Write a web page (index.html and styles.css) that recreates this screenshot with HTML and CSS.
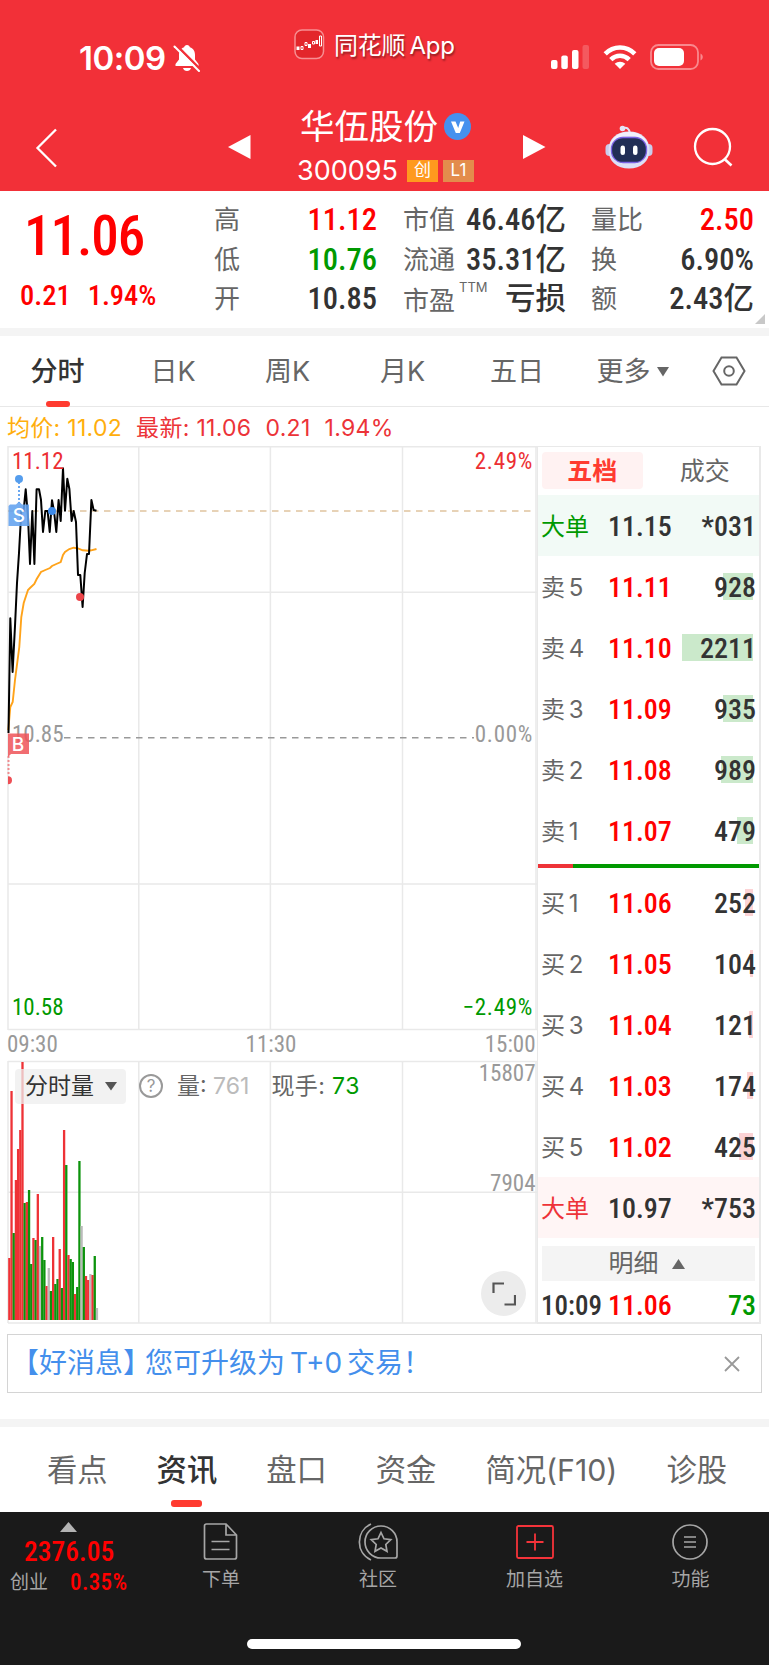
FILE: index.html
```html
<!DOCTYPE html>
<html lang="zh-CN">
<head>
    <meta charset="UTF-8">
    <meta name="viewport" content="width=device-width, initial-scale=1.0">
    <title>华伍股份 300095</title>
    <link rel="stylesheet" href="styles.css">
</head>
<body>
    <header>
        <div class="status-bar">
            <div class="clock">
                <span>10:09</span>
                <svg width="28" height="28" viewBox="0 0 28 28">
                    <path d="M14 1c-1.600 0-2.700 1-2.900 2.300C7.500 4.500 6 7.500 6 11v4.500L2.500 20v2h23v-2L22 15.500V11c0-3.500-1.500-6.500-5.100-7.700C16.700 2 15.600 1 14 1zM10 24h8c-.5 1.800-2 3-4 3s-3.500-1.200-4-3z" fill="#fff"/>
                    <path d="M3.500 1.500L27.500 25.500" stroke="#f23038" stroke-width="2.500"/>
                    <path d="M1.500 2.500L26 27" stroke="#fff" stroke-width="2" stroke-linecap="round"/>
                </svg>
            </div>
            <div class="app-name">
                <svg width="31" height="31" viewBox="0 0 31 31">
                    <rect x="1" y="1" width="28.500" height="28.500" rx="7" fill="#e3262b" stroke="#f78f92" stroke-width="1.500"/>
                    <path d="M2.500 17.500h3v3.500h-3zM14 15h3v4h-3zM21.500 11h2.500v4h-2.500z" fill="#fff"/>
                    <path d="M7 17.500h2v3H7zM11 13.500h2v3h-2zM18.500 12.500h2v2.500h-2zM25.500 7h2v10h-2z" fill="none" stroke="#fff" stroke-width="1"/>
                </svg>
                <span>同花顺 App</span>
            </div>
            <div class="signals">
                <svg width="40" height="26" viewBox="0 0 40 26">
                    <g fill="#fff">
                        <rect x="1" y="16" width="6.500" height="9" rx="2"/>
                        <rect x="11.300" y="11.500" width="6.500" height="13.500" rx="2"/>
                        <rect x="22" y="6" width="6.500" height="19" rx="2"/>
                        <rect x="32.500" y="1" width="6.500" height="24" rx="2" opacity=".2"/>
                    </g>
                </svg>
                <svg width="34" height="26" viewBox="0 0 34 26">
                    <g fill="none" stroke="#fff" stroke-width="4.600">
                        <path d="M2.200 9.800C10.500 1.400 23.500 1.400 31.800 9.800"/>
                        <path d="M7.800 15.600c5.300-5.200 13.100-5.200 18.400 0"/>
                    </g>
                    <path d="M17 25l-5.300-5.200c3-2.900 7.600-2.900 10.600 0z" fill="#fff"/>
                </svg>
                <svg width="54" height="28" viewBox="0 0 54 28">
                    <rect x="1" y="2" width="47" height="24" rx="7.500" fill="none" stroke="#f9888d" stroke-width="1.800"/>
                    <rect x="4" y="5" width="30" height="18" rx="5" fill="#fff"/>
                    <path d="M50.500 10.500c3 1.500 3 5.500 0 7z" fill="#f9888d"/>
                </svg>
            </div>
        </div>
        <div class="title-bar">
            <svg class="back" width="24" height="42" viewBox="0 0 24 42">
                <path d="M21 2.500L2.500 21 21 39.500" fill="none" stroke="#fff" stroke-width="2.300"/>
            </svg>
            <svg class="prev" width="23" height="26" viewBox="0 0 23 26"><path d="M0 13L22.500 1v24z" fill="#fff"/></svg>
            <div class="stock">
                <div class="stock-name">
                    <span>华伍股份</span>
                    <svg width="27" height="27" viewBox="0 0 27 27">
                        <circle cx="13.500" cy="13.500" r="13.500" fill="#4691ee"/>
                        <path d="M7 8.500h4.500l2.700 6.500 2-6.500H20.500L15.800 20h-4z" fill="#fff"/>
                    </svg>
                </div>
                <div class="stock-code">
                    <span>300095</span>
                    <i class="tag">创</i>
                    <i class="tag level">L1</i>
                </div>
            </div>
            <svg class="next" width="23" height="26" viewBox="0 0 23 26"><path d="M22.500 13L0 1v24z" fill="#fff"/></svg>
            <svg class="robot" width="48" height="44" viewBox="0 0 48 44">
                <path d="M17 3.500c5-2 7 0 8 5" fill="none" stroke="#e4e4f7" stroke-width="2"/>
                <circle cx="17.500" cy="3.500" r="2.800" fill="#e4e4f7"/>
                <rect x=".5" y="19" width="8" height="12" rx="4" fill="#c9cdec"/>
                <rect x="39.500" y="19" width="8" height="12" rx="4" fill="#c9cdec"/>
                <path d="M24 6.500c12 0 20.500 7 20.500 18.500S36 43.500 24 43.500 3.500 36.500 3.500 25 12 6.500 24 6.500z" fill="#dddff6"/>
                <path d="M24 7c11 0 18 6 19.500 15-3-8-9-11-19.500-11S7.500 14 4.500 22C6 13 13 7 24 7z" fill="#f1f0fc"/>
                <rect x="6.500" y="12.500" width="35" height="25" rx="11.500" fill="#222e55" stroke="#7a62e4" stroke-width="1.300"/>
                <rect x="15.500" y="20.500" width="4.500" height="9.500" rx="2.200" fill="#fff"/>
                <rect x="28" y="20.500" width="4.500" height="9.500" rx="2.200" fill="#fff"/>
            </svg>
            <svg class="search" width="40" height="40" viewBox="0 0 40 40">
                <circle cx="19.500" cy="19.500" r="17.500" fill="none" stroke="#fff" stroke-width="2.300"/>
                <path d="M31.500 32l7 6.500" stroke="#fff" stroke-width="2.600"/>
            </svg>
        </div>
    </header>

    <section class="quote">
        <div class="price-box">
            <div class="price num">11.06</div>
            <div class="change num"><span>0.21</span><span>1.94%</span></div>
        </div>
        <dl>
            <div><dt>高</dt><dd class="num up">11.12</dd></div>
            <div><dt>低</dt><dd class="num down">10.76</dd></div>
            <div><dt>开</dt><dd class="num">10.85</dd></div>
        </dl>
        <dl>
            <div><dt>市值</dt><dd class="num">46.46亿</dd></div>
            <div><dt>流通</dt><dd class="num">35.31亿</dd></div>
            <div><dt class="low">市盈<sup>TTM</sup></dt><dd class="num">亏损</dd></div>
        </dl>
        <dl>
            <div><dt>量比</dt><dd class="num up">2.50</dd></div>
            <div><dt>换</dt><dd class="num">6.90%</dd></div>
            <div><dt>额</dt><dd class="num">2.43亿</dd></div>
        </dl>
    </section>

    <nav class="period-tabs">
        <span class="active">分时</span>
        <span>日K</span>
        <span>周K</span>
        <span>月K</span>
        <span>五日</span>
        <span>更多<svg width="12" height="10" viewBox="0 0 12 10"><path d="M0 0h12L6 9.500z" fill="#666"/></svg></span>
        <span>
            <svg width="34" height="30" viewBox="0 0 34 30">
                <path d="M9.500 1.500h15L32.500 15l-8 13.500h-15L1.500 15z" fill="none" stroke="#666" stroke-width="2"/>
                <circle cx="17" cy="15" r="4.800" fill="none" stroke="#666" stroke-width="2"/>
            </svg>
        </span>
    </nav>

    <div class="legend">
        <span class="avg">均价: 11.02</span>
        <span>最新: 11.06</span>
        <span>0.21</span>
        <span>1.94%</span>
    </div>

    <main>
        <div class="charts">
            <svg class="trend" width="537" height="614" viewBox="0 446 537 614">
                <g fill="none" stroke="#e9e9e9" stroke-width="1.500">
                    <path d="M8 446.700H537M8 592.300H537M8 884H537M8 1029.500H537M8 446V1030M138.800 446V1030M270.400 446V1030M402.500 446V1030M536 446V1030"/>
                </g>
                <path d="M8 511H536" stroke="#e0c39f" stroke-width="1.500" stroke-dasharray="6.500 5.500"/>
                <path d="M64 737.800H474" stroke="#999" stroke-width="1.500" stroke-dasharray="6.500 5.500"/>
                <text x="12" y="742" fill="#999">10.85</text>
                <text class="percent" x="533" y="742" fill="#999" text-anchor="end">0.00%</text>
                <polyline fill="none" stroke="#ffa31a" stroke-width="1.900" points="8.300,730 10.300,707 12.700,702 15,680 19.300,647 21.300,617 23.700,603 28,590 30,588 34.300,584 36.700,579 41,572 45.300,570 50,568 52,566 56.300,564 60.700,562 63,555 65,552 69.300,549 73.700,547.700 78,548.300 82.700,550.300 89,550.700 91.300,550.300 96.500,549"/>
                <polyline fill="none" stroke="#000" stroke-width="2" stroke-linejoin="round" points="8.500,733 10.300,618.300 12.600,672 15,626 17,583 19,553 21.300,511 23.600,511 25.700,489.300 28,517 30,564 32.300,511 34.400,564 36.600,489.300 39,489.300 41,500 43,532 45.300,511 47.600,511 49.700,532 52,500.300 54,511 56.300,532 58.600,500 60.700,521 63,468.300 65,510.700 67.300,478.700 69.400,489 71.600,521 73.700,511 76,522 78,575 80.300,575 82.600,607 84.700,573 87,554 89,554 91.400,500 93.600,510 96.500,510.700"/>
                <text x="12" y="469" fill="#ec2f33">11.12</text>
                <text class="percent" x="533" y="469" fill="#ec2f33" text-anchor="end">2.49%</text>
                <text x="12" y="1015" fill="#009900">10.58</text>
                <text class="percent" x="533" y="1015" fill="#009900" text-anchor="end">−2.49%</text>

                <!-- sell / buy marks -->
                <path d="M19 482V503" stroke="#6aa7f0" stroke-width="2" stroke-dasharray="2 2"/>
                <circle cx="19" cy="479" r="4" fill="#559ded"/>
                <circle cx="52" cy="511" r="4" fill="#3e8bea"/>
                <path d="M10 504.500h6l3-3 3 3h7v21.500H8.500v-20z" fill="#62a2ef" opacity=".88"/>
                <text class="mark" x="19" y="522" text-anchor="middle">S</text>
                <path d="M8.500 756V776" stroke="#f08c8f" stroke-width="2" stroke-dasharray="2 2"/>
                <path d="M8 776.200a4 4 0 0 1 0 8z" fill="#ee4f55"/>
                <circle cx="80" cy="597" r="4" fill="#ec4449"/>
                <path d="M8 733.500h21V754H11l-3 3z" fill="#ee5358" opacity=".85"/>
                <text class="mark" x="18" y="751" text-anchor="middle">B</text>

                <text x="7" y="1052" fill="#999">09:30</text>
                <text x="271" y="1052" fill="#999" text-anchor="middle">11:30</text>
                <text x="535.500" y="1052" fill="#999" text-anchor="end">15:00</text>
            </svg>
            <div class="volume">
                <svg width="537" height="264" viewBox="0 1060 537 264">
                    <path d="M8 1061.500H537M8 1192.300H537M8 1323H537M8 1061V1323M138.800 1061V1323M270.400 1061V1323M402.500 1061V1323M536 1061V1323" fill="none" stroke="#e9e9e9" stroke-width="1.500"/>
                    <g id="volumeBars"></g>
                    <text x="535.500" y="1080.500" fill="#999" text-anchor="end">15807</text>
                    <text x="535.500" y="1191" fill="#999" text-anchor="end">7904</text>
                </svg>
                <div class="volume-tools">
                    <div class="picker">分时量<svg width="12" height="9" viewBox="0 0 12 9"><path d="M0 0h12L6 8.500z" fill="#555"/></svg></div>
                    <span class="help">?</span>
                    <span>量: <b class="flat">761</b></span>
                    <span class="current">现手: <b class="down">73</b></span>
                </div>
                <div class="expand">
                    <svg width="24" height="24" viewBox="0 0 24 24"><path d="M1.500 11V1.500H12M23 13v9.500H12.500" fill="none" stroke="#555" stroke-width="2.200"/></svg>
                </div>
            </div>
        </div>

        <aside class="book">
            <div class="book-tabs"><span class="active">五档</span><span>成交</span></div>
            <div class="row big-sell"><span>大单</span><b>11.15</b><em>*031</em></div>
            <div class="row sell"><span>卖 5</span><b>11.11</b><em>928</em><i style="width: 30px"></i></div>
            <div class="row sell"><span>卖 4</span><b>11.10</b><em>2211</em><i style="width: 71px"></i></div>
            <div class="row sell"><span>卖 3</span><b>11.09</b><em>935</em><i style="width: 30px"></i></div>
            <div class="row sell"><span>卖 2</span><b>11.08</b><em>989</em><i style="width: 32px"></i></div>
            <div class="row sell"><span>卖 1</span><b>11.07</b><em>479</em><i style="width: 16px"></i></div>
            <div class="ratio"><i style="width: 15.7%"></i></div>
            <div class="row buy"><span>买 1</span><b>11.06</b><em>252</em><i style="width: 8px"></i></div>
            <div class="row buy"><span>买 2</span><b>11.05</b><em>104</em><i style="width: 3px"></i></div>
            <div class="row buy"><span>买 3</span><b>11.04</b><em>121</em><i style="width: 4px"></i></div>
            <div class="row buy"><span>买 4</span><b>11.03</b><em>174</em><i style="width: 6px"></i></div>
            <div class="row buy"><span>买 5</span><b>11.02</b><em>425</em><i style="width: 14px"></i></div>
            <div class="row big-buy"><span>大单</span><b>10.97</b><em>*753</em></div>
            <div class="detail">明细<svg width="13" height="10" viewBox="0 0 13 10"><path d="M0 10h13L6.500 0z" fill="#666"/></svg></div>
            <div class="row tick"><span>10:09</span><b>11.06</b><em class="down">73</em></div>
        </aside>
    </main>

    <div class="notice">
        <span><span class="bracket">【好消息】</span>您可升级为 T+0 交易！</span>
        <svg width="16" height="16" viewBox="0 0 16 16"><path d="M1 1l14 14M15 1L1 15" stroke="#999" stroke-width="1.800"/></svg>
    </div>

    <nav class="info-tabs">
        <span>看点</span>
        <span class="active">资讯</span>
        <span>盘口</span>
        <span>资金</span>
        <span>简况(F10)</span>
        <span>诊股</span>
    </nav>

    <footer>
        <div class="toolbar">
            <div class="index-box">
                <svg width="17" height="10" viewBox="0 0 17 10"><path d="M0 10h17L8.500 0z" fill="#b3b3b3"/></svg>
                <div class="index-value num">2376.05</div>
                <div class="index-change"><span>创业</span><span class="num">0.35%</span></div>
            </div>
            <div class="tool">
                <svg width="40" height="40" viewBox="0 0 40 40" fill="none" stroke="#a6a6a6" stroke-width="1.700">
                    <path d="M25 3H5.500Q3.500 3 3.500 5v31q0 2 2 2h28q2 0 2-2V14zM25 3v11h10.500M10.500 20.500h18M10.500 28.500h18"/>
                </svg>
                <span>下单</span>
            </div>
            <div class="tool">
                <svg width="40" height="40" viewBox="0 0 40 40" fill="none" stroke="#a6a6a6" stroke-width="1.700">
                    <path d="M23 5a16 16 0 0 0 0 32h14q2 0 2-2V21A16 16 0 0 0 23 5zM13 3C-2.500 10-2.500 32 13 39"/>
                    <path d="M23 11.500l3 6.300 6.800.9-5 4.800 1.200 6.800-6-3.300-6 3.300 1.200-6.800-5-4.800 6.800-.9z"/>
                </svg>
                <span>社区</span>
            </div>
            <div class="tool">
                <svg width="40" height="40" viewBox="0 0 40 40" fill="none" stroke="#f5333a" stroke-width="1.800">
                    <rect x="2" y="5" width="36" height="32" rx="1.500"/>
                    <path d="M20 12.500v17M11.500 21h17"/>
                </svg>
                <span>加自选</span>
            </div>
            <div class="tool">
                <svg width="40" height="40" viewBox="0 0 40 40" fill="none" stroke="#a6a6a6" stroke-width="1.700">
                    <circle cx="19" cy="21" r="17"/>
                    <path d="M13 16h12M13 21h12M13 26h12"/>
                </svg>
                <span>功能</span>
            </div>
        </div>
        <div class="home-indicator"></div>
    </footer>

    <script>
        // one entry per minute: colour + bar height
        const volumes = [
            ["r", 62], ["r", 229], ["g", 87], ["r", 140], ["r", 171], ["r", 190], ["r", 258], ["g", 117],
            ["r", 118], ["g", 130], ["g", 56], ["r", 82], ["g", 80], ["r", 126], ["n", 74], ["g", 83],
            ["g", 60], ["r", 34], ["n", 52], ["g", 29], ["r", 83], ["g", 36], ["g", 41], ["r", 71],
            ["g", 32], ["r", 190], ["g", 155], ["r", 65], ["g", 61], ["g", 58], ["r", 26], ["g", 33],
            ["g", 159], ["n", 94], ["g", 73], ["r", 44], ["r", 40], ["n", 46], ["r", 45], ["g", 64], ["n", 12]
        ];
        const colors = { r: "#ee3236", g: "#0c930c", n: "#bbbbbb" };
        const bars = document.getElementById("volumeBars");

        volumes.forEach(([type, height], i) => {
            const bar = document.createElementNS("http://www.w3.org/2000/svg", "rect");
            bar.setAttribute("x", 8.2 + i * 2.19);
            bar.setAttribute("y", 1320 - height);
            bar.setAttribute("width", 2.3);
            bar.setAttribute("height", height);
            bar.setAttribute("fill", colors[type]);
            bars.appendChild(bar);
        });
    </script>
</body>
</html>
```
FILE: styles.css
```css
* { box-sizing: border-box; }
body {
    margin: 0;
    width: 769px;
    height: 1665px;
    overflow: hidden;
    background: #fff;
    color: #333;
    font-family: Inter, "Noto Sans CJK SC", sans-serif;
}
svg { display: block; flex: none; }
i, em { font-style: normal; }
b { font-weight: 500; }
.num, .book b, .book em, .charts text {
    font-family: Roboto, "Noto Sans CJK SC", sans-serif;
    font-weight: 500;
    font-stretch: 87%;
}
.charts text { font-weight: 450; }
.up { color: #ff0000; }
.down { color: #009900; }

/* Header */
header {
    height: 191px;
    background: #f23038;
    color: #fff;
}
.status-bar {
    height: 104px;
    display: flex;
    padding-left: 79px;
}
.clock {
    display: flex;
    align-items: center;
    gap: 7px;
    width: 215px;
    height: 28px;
    margin-top: 44px;
    font-size: 33px;
    font-weight: 600;
    letter-spacing: -0.5px;
}
.app-name {
    display: flex;
    align-items: center;
    gap: 9px;
    width: 256px;
    height: 31px;
    margin-top: 28px;
    font-size: 24px;
    letter-spacing: -0.3px;
    word-spacing: -2px;
    white-space: nowrap;
    text-shadow: 1px 2px 2px rgba(0, 0, 0, .4);
}
.app-name svg { margin-top: 2px; }
.signals {
    display: flex;
    align-items: center;
    gap: 13px;
    height: 28px;
    margin-top: 43px;
}
.title-bar {
    display: flex;
    height: 87px;
    padding-left: 35px;
}
.back { margin-top: 23px; }
.prev { margin: 30px 0 0 169px; }
.stock { width: 272px; padding-left: 49px; }
.stock-name {
    display: flex;
    align-items: center;
    gap: 6px;
    height: 46px;
    font-size: 34.500px;
    line-height: 46px;
    white-space: nowrap;
}
.stock-name svg { margin-top: -2px; }
.stock-code {
    display: flex;
    align-items: center;
    height: 40px;
    margin: 1px 0 0 -3px;
    font-size: 27px;
    line-height: 40px;
}
.tag {
    width: 31px;
    height: 22px;
    margin-left: 9px;
    background: #ff9a1e;
    font-size: 17px;
    line-height: 21px;
    text-align: center;
}
.tag.level { margin-left: 5px; background: #e38c4c; }
.next { margin-top: 30px; }
.robot { margin: 21px 0 0 59px; }
.search { margin: 23px 0 0 40px; }

/* Quote summary */
.quote {
    position: relative;
    display: grid;
    grid-template-columns: 194px 163px 163px 162px;
    height: 137px;
    padding-left: 20px;
}
.quote::after {
    content: "";
    position: absolute;
    right: 4px;
    bottom: 4px;
    border-left: 10px solid transparent;
    border-bottom: 10px solid #c8c8c8;
}
.price-box { color: #ff0000; }
.price {
    height: 77px;
    margin-top: 7px;
    padding-left: 4px;
    font-size: 55px;
    line-height: 77px;
    letter-spacing: -1px;
}
.change {
    display: flex;
    gap: 17px;
    font-size: 28.500px;
    line-height: 42px;
}
dl { margin: 9px 0 0; }
dl > div {
    display: flex;
    justify-content: space-between;
    height: 39.500px;
    line-height: 40px;
}
.quote dl:nth-of-type(2) { padding-left: 26px; margin-right: -26px; }
.quote dl:nth-of-type(3) { padding-left: 51px; margin-right: -52px; }
dt { font-size: 26px; color: #666; white-space: nowrap; }
dd { margin: 0; font-size: 30.500px; white-space: nowrap; }
.low { line-height: 43px; }
sup {
    position: relative;
    top: -8px;
    margin-left: 4px;
    font-size: 13px;
    line-height: 0;
}

/* Period tabs */
.period-tabs {
    display: grid;
    grid-template-columns: 115px 116px 113px 117px 112px 119px 73px;
    height: 79px;
    border-top: 8px solid #f4f4f4;
    border-bottom: 1.500px solid #e8e8e8;
    font-size: 27px;
    line-height: 72px;
    color: #666;
}
.period-tabs span {
    position: relative;
    display: flex;
    justify-content: center;
    align-items: center;
    gap: 6px;
}
.period-tabs span:last-child { padding-bottom: 2px; }
.active { font-weight: 500; color: #333; }
nav .active::after {
    content: "";
    position: absolute;
    left: 50%;
    bottom: 1px;
    width: 24px;
    height: 6px;
    margin-left: -12px;
    border-radius: 3px;
    background: #ff3b30;
}
.legend {
    display: flex;
    gap: 14px;
    height: 39px;
    padding-left: 7px;
    font-size: 23px;
    line-height: 42px;
    letter-spacing: 0.3px;
    color: #ec3338;
}
.avg { color: #ffae0d; }

/* Charts */
main { display: flex; height: 878px; }
.charts { width: 537px; }
.charts text { font-size: 23px; }
.charts text.percent { letter-spacing: 0.7px; }
.charts text.mark { font-family: Inter, sans-serif; font-size: 19px; fill: #fff; }
.volume { position: relative; }
.volume-tools {
    position: absolute;
    left: 15px;
    top: 9px;
    display: flex;
    align-items: center;
    height: 34px;
    font-size: 23px;
    line-height: 32px;
    color: #666;
    white-space: nowrap;
}
.volume-tools b { font-weight: 400; }
.flat { color: #bbb; }
.picker {
    display: flex;
    align-items: center;
    gap: 11px;
    width: 111px;
    height: 35px;
    padding-left: 10px;
    border-radius: 4px;
    background: rgba(238, 238, 238, .75);
    color: #333;
}
.help {
    width: 24px;
    height: 24px;
    margin: 0 14px 0 13px;
    border: 2px solid #999;
    border-radius: 50%;
    font-size: 17px;
    line-height: 20px;
    text-align: center;
    color: #999;
}
.current { margin-left: 22px; letter-spacing: 0.4px; }
.expand {
    position: absolute;
    left: 481px;
    top: 211px;
    width: 45px;
    height: 45px;
    display: flex;
    justify-content: center;
    align-items: center;
    border-radius: 50%;
    background: #ececec;
}

/* Order book */
.book {
    width: 224px;
    border: 1.500px solid #e9e9e9;
    border-width: 1px 2px 2px 1px;
}
.book-tabs {
    display: flex;
    height: 48px;
    padding: 5px 4px;
    font-size: 25px;
    line-height: 38px;
    text-align: center;
    color: #666;
}
.book-tabs span { width: 101px; height: 37px; }
.book-tabs span + span { margin-left: 12px; }
.book-tabs .active { border-radius: 4px; background: #fff2f2; color: #ff3b30; font-weight: 700; }
.row {
    position: relative;
    display: flex;
    height: 61px;
    padding: 0 3px;
    line-height: 63px;
}
.row span { width: 67px; font-size: 24px; word-spacing: -3px; color: #666; white-space: nowrap; }
.row b { font-size: 28px; color: #ff0000; }
.row em { position: relative; z-index: 1; margin-left: auto; font-size: 28px; }
.row i {
    position: absolute;
    right: 6px;
    top: 17px;
    height: 27px;
}
.sell i { background: #cbe9cb; }
.buy i { background: #fcd3d5; }
.big-sell { background: #f2faf6; }
.big-buy { background: #fff5f5; }
.big-sell b, .big-buy b { color: #333; }
.row.big-sell span { color: #009900; }
.row.big-buy span { color: #ee3338; }
.ratio { height: 4px; margin: 3px 0 4px; background: #009900; }
.ratio i { display: block; height: 4px; background: #ee3338; }
.detail {
    display: flex;
    justify-content: center;
    align-items: center;
    gap: 13px;
    height: 35px;
    margin: 8px 4px 0;
    padding-right: 4px;
    background: #f4f4f4;
    font-size: 25px;
    line-height: 35px;
    color: #666;
}
.tick { height: 41px; line-height: 50px; }
.row.tick span { font-family: Roboto, sans-serif; font-size: 27px; color: #333; font-weight: 500; font-stretch: 87%; }
.row.tick em { color: #009900; }

/* Notice */
.notice {
    display: flex;
    justify-content: space-between;
    align-items: center;
    width: 755px;
    height: 59px;
    margin: 10px 0 0 7px;
    padding: 0 21px 0 3px;
    border: 1px solid #d4d4d4;
    font-size: 28px;
    line-height: 57px;
    word-spacing: -3px;
    color: #448fec;
}
.bracket { margin-right: -6px; }

/* Info tabs */
.info-tabs {
    display: flex;
    gap: 49px;
    height: 93px;
    margin-top: 26px;
    padding-left: 47px;
    border-top: 8px solid #f4f4f4;
    font-size: 30.300px;
    line-height: 86px;
    color: #666;
    white-space: nowrap;
}
.info-tabs span { position: relative; }
.info-tabs .active::after {
    bottom: 5px;
    width: 31px;
    height: 7px;
    margin-left: -16px;
}

/* Bottom bar */
footer { height: 153px; background: #1a1a1a; color: #a6a6a6; }
.toolbar {
    display: grid;
    grid-template-columns: 142px 158px 156px 157px 155px;
    height: 126px;
}
.index-box { padding-top: 10px; }
.index-box svg { margin: 0 auto 0 60px; }
.index-value {
    padding-left: 24px;
    font-size: 27.500px;
    line-height: 39px;
    color: #ff0000;
}
.index-change {
    display: flex;
    gap: 22px;
    padding-left: 10px;
    font-size: 19px;
    line-height: 24px;
}
.index-change .num { font-size: 23px; letter-spacing: 0.4px; color: #ff0000; }
.tool {
    display: flex;
    flex-direction: column;
    align-items: center;
    padding-top: 9px;
    font-size: 19px;
    line-height: 37px;
}
.home-indicator {
    width: 274px;
    height: 10px;
    margin: 1px auto 0 247px;
    border-radius: 5px;
    background: #fff;
}
```
